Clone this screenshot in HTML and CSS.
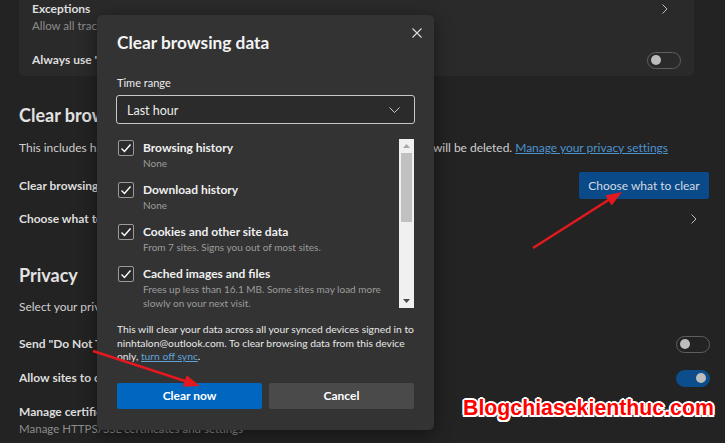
FILE: index.html
```html
<!DOCTYPE html>
<html lang="en">
<head>
    <meta charset="UTF-8">
    <meta name="viewport" content="width=device-width, initial-scale=1.0">
    <title>Clear browsing data</title>
    <link rel="stylesheet" href="styles.css">
</head>
<body>
    <main class="settings">
        <div class="card">
            <div class="card-row first">
                <div class="text">
                    <div class="label">Exceptions</div>
                    <div class="sub">Allow all trackers on sites you choose</div>
                </div>
                <svg class="chev chev-card" width="6" height="10" viewBox="0 0 6 10"><path d="M0.5 0.5 L5 5 L0.5 9.5" fill="none" stroke="#bbb" stroke-width="1"/></svg>
            </div>
            <div class="card-row">
                <div class="label text">Always use "Strict" tracking prevention when browsing InPrivate</div>
                <span class="toggle"></span>
            </div>
        </div>

        <section>
            <h2>Clear browsing data</h2>
            <p class="desc">This includes history, passwords, cookies, and more. Only data from this profile will be deleted. <a href="#">Manage your privacy settings</a></p>
            <div class="row clear-row">
                <div class="label text">Clear browsing data now</div>
                <button class="choose-btn">Choose what to clear</button>
            </div>
            <div class="row choose-row">
                <div class="label text">Choose what to clear every time you close the browser</div>
                <svg class="chev" width="6" height="10" viewBox="0 0 6 10"><path d="M0.5 0.5 L5 5 L0.5 9.5" fill="none" stroke="#bbb" stroke-width="1"/></svg>
            </div>
        </section>

        <section>
            <h2>Privacy</h2>
            <p class="desc">Select your privacy settings for Microsoft Edge.</p>
            <div class="row toggle-row dnt">
                <div class="label text">Send "Do Not Track" requests</div>
                <span class="toggle"></span>
            </div>
            <div class="row toggle-row pay">
                <div class="label text">Allow sites to check if you have payment methods saved</div>
                <span class="toggle on"></span>
            </div>
            <div class="certs">
                <div class="label">Manage certificates</div>
                <div class="sub">Manage HTTPS/SSL certificates and settings</div>
            </div>
        </section>
    </main>

    <div class="dialog">
        <svg class="close" width="10" height="10" viewBox="0 0 10 10"><path d="M0.5 0.5 L9.5 9.5 M9.5 0.5 L0.5 9.5" stroke="#ddd" stroke-width="1.1"/></svg>
        <h1>Clear browsing data</h1>
        <div class="field-label">Time range</div>
        <div class="select">
            <span>Last hour</span>
            <svg width="11" height="6" viewBox="0 0 11 6"><path d="M0.5 0.5 L5.5 5.5 L10.5 0.5" fill="none" stroke="#ccc" stroke-width="1"/></svg>
        </div>

        <div class="list">
            <div class="items">
                <div class="item">
                    <span class="check"><svg width="14" height="14" viewBox="0 0 14 14"><path d="M2.5 7.5 L5.5 10.5 L11.5 3.5" fill="none" stroke="#fff" stroke-width="1.4"/></svg></span>
                    <div>
                        <div class="item-title">Browsing history</div>
                        <div class="item-desc">None</div>
                    </div>
                </div>
                <div class="item">
                    <span class="check"><svg width="14" height="14" viewBox="0 0 14 14"><path d="M2.5 7.5 L5.5 10.5 L11.5 3.5" fill="none" stroke="#fff" stroke-width="1.4"/></svg></span>
                    <div>
                        <div class="item-title">Download history</div>
                        <div class="item-desc">None</div>
                    </div>
                </div>
                <div class="item">
                    <span class="check"><svg width="14" height="14" viewBox="0 0 14 14"><path d="M2.5 7.5 L5.5 10.5 L11.5 3.5" fill="none" stroke="#fff" stroke-width="1.4"/></svg></span>
                    <div>
                        <div class="item-title">Cookies and other site data</div>
                        <div class="item-desc">From 7 sites. Signs you out of most sites.</div>
                    </div>
                </div>
                <div class="item">
                    <span class="check"><svg width="14" height="14" viewBox="0 0 14 14"><path d="M2.5 7.5 L5.5 10.5 L11.5 3.5" fill="none" stroke="#fff" stroke-width="1.4"/></svg></span>
                    <div>
                        <div class="item-title">Cached images and files</div>
                        <div class="item-desc">Frees up less than 16.1 MB. Some sites may load more<br>slowly on your next visit.</div>
                    </div>
                </div>
            </div>
            <div class="scrollbar">
                <svg class="arrow" width="7" height="4" viewBox="0 0 7 4"><path d="M0 4 L3.5 0 L7 4 Z" fill="#a8a8a8"/></svg>
                <div class="thumb"></div>
                <svg class="arrow down" width="7" height="4" viewBox="0 0 7 4"><path d="M0 0 L3.5 4 L7 0 Z" fill="#4a4a4a"/></svg>
            </div>
        </div>

        <p class="note">This will clear your data across all your synced devices signed in to<br>ninhtalon@outlook.com. To clear browsing data from this device<br>only, <a href="#">turn off sync</a>.</p>

        <div class="actions">
            <button class="btn primary">Clear now</button>
            <button class="btn">Cancel</button>
        </div>
    </div>

    <svg class="arrows" width="725" height="443" viewBox="0 0 725 443">
        <line x1="93" y1="351" x2="188" y2="382" stroke="#e3191f" stroke-width="2.5"/>
        <polygon points="200,386 182.9,386.7 186.7,375.3" fill="#e3191f"/>
        <line x1="533" y1="248" x2="610" y2="199" stroke="#e3191f" stroke-width="2.5"/>
        <polygon points="622,192 611.7,205.6 605.3,195.4" fill="#e3191f"/>
    </svg>

    <div class="watermark">Blogchiasekienthuc.com</div>
</body>
</html>
```

FILE: styles.css
```css
:root {
    --page-bg : #232323;
    --card-bg : #2a2a2a;
    --dialog-bg : #333333;
    --text : #d9d9d9;
    --muted : #8c8c8c;
    --link : #4b93cf;
}

body {
    margin : 0;
    height : 443px;
    overflow : hidden;
    position : relative;
    background-color : var(--page-bg);
    color : var(--text);
    font-family : Lato, "Segoe UI", sans-serif;
    font-size : 12px;
}

/* settings page behind the dialog */
.settings {
    padding : 0 15px 0 19px;
}

.card {
    background-color : var(--card-bg);
    border-radius : 0 0 5px 5px;
    margin-right : 16px;
    padding : 1px 13px 0 13px;
    height : 75px;
}

.card-row {
    display : flex;
    justify-content : space-between;
    align-items : center;
    height : 34px;
    margin-top : 7px;
}

.card-row.first {
    align-items : flex-start;
    margin-top : 0;
    height : 35px;
}

.chev-card {
    margin : 3px 13px 0 0;
}

.text {
    flex : 1;
    min-width : 0;
    white-space : nowrap;
    overflow : hidden;
}

.label {
    font-weight : 700;
    line-height : 16px;
    color : #dedede;
}

.sub {
    color : var(--muted);
    line-height : 18px;
    font-size : 11.5px;
}

h2 {
    margin : 27px 0 0;
    font-size : 18px;
    line-height : 24px;
    font-weight : 700;
    color : #e2e2e2;
}

.desc {
    margin : 13px 0 0;
    line-height : 16px;
    white-space : nowrap;
    color : #cfcfcf;
    letter-spacing : -0.02px;
}

.desc a {
    color : var(--link);
}

.row {
    display : flex;
    justify-content : space-between;
    align-items : center;
}

.clear-row {
    margin-top : 16px;
    height : 27px;
}

.choose-btn {
    border : none;
    border-radius : 2px;
    height : 27px;
    width : 130px;
    margin-right : 1px;
    background-color : #0a4a88;
    color : #d3dae2;
    font-family : inherit;
    font-size : 12px;
}

.choose-row {
    margin-top : 6px;
    height : 28px;
}

.choose-row .chev {
    margin-right : 13px;
}

section + section h2 {
    margin-top : 30px;
}

section + section .desc {
    margin-top : 12px;
}

.toggle-row {
    height : 18px;
}

.dnt {
    margin-top : 20px;
}

.pay {
    margin-top : 16px;
}

.toggle {
    width : 34px;
    height : 17px;
    box-sizing : border-box;
    border : 1px solid #5f5f5f;
    border-radius : 9px;
    display : flex;
    align-items : center;
    padding : 0 3px;
    flex-shrink : 0;
}

.toggle::after {
    content : "";
    width : 10px;
    height : 10px;
    border-radius : 50%;
    background-color : #bdbdbd;
}

.toggle.on {
    background-color : #0c4d8c;
    border-color : #0c4d8c;
    justify-content : flex-end;
}

.certs {
    margin-top : 17px;
    white-space : nowrap;
}

/* dialog */
.dialog {
    position : absolute;
    left : 97px;
    top : 15px;
    width : 337px;
    height : 415px;
    box-sizing : border-box;
    padding : 16px 20px 0 20px;
    background-color : var(--dialog-bg);
    border-radius : 5px;
    box-shadow : 0 4px 18px rgba(0, 0, 0, 0.45);
    color : #ececec;
}

.close {
    position : absolute;
    top : 13px;
    right : 12px;
}

h1 {
    margin : 0;
    font-size : 17.3px;
    line-height : 24px;
    font-weight : 700;
    color : #f3f3f3;
}

.field-label {
    margin-top : 21px;
    font-size : 11px;
    line-height : 14px;
}

.select {
    margin : 5px -1px 0;
    height : 29px;
    box-sizing : border-box;
    border : 1px solid #c8c8c8;
    border-radius : 3px;
    background-color : #2b2b2b;
    display : flex;
    align-items : center;
    justify-content : space-between;
    padding : 1px 14px 0 10px;
    font-size : 12.5px;
}

.list {
    margin-top : 15px;
    height : 169px;
    display : flex;
    overflow : hidden;
}

.items {
    flex : 1;
    padding-top : 1px;
}

.item {
    display : flex;
    gap : 9px;
    height : 42px;
}

.check {
    width : 16px;
    height : 16px;
    box-sizing : border-box;
    border : 1px solid #9a9a9a;
    border-radius : 2px;
    margin-left : 1px;
    background-color : #2c2c2c;
    display : flex;
    align-items : center;
    justify-content : center;
    flex-shrink : 0;
}

.item-title {
    font-weight : 700;
    line-height : 16px;
    color : #f0f0f0;
}

.item-desc {
    font-size : 10px;
    line-height : 14px;
    color : #9c9c9c;
}

.scrollbar {
    width : 15px;
    background-color : #f0f0f0;
    display : flex;
    flex-direction : column;
    align-items : center;
}

.scrollbar .arrow {
    margin-top : 5px;
}

.thumb {
    width : 11px;
    height : 69px;
    margin-top : 5px;
    background-color : #c1c1c1;
}

.scrollbar .arrow.down {
    margin-top : auto;
    margin-bottom : 5px;
}

.note {
    margin : 15px 0 0;
    font-size : 10.3px;
    line-height : 13.5px;
    color : #e8e8e8;
}

.note a {
    color : #5ea2da;
}

.actions {
    margin-top : 19px;
    display : grid;
    grid-template-columns : 1fr 1fr;
    gap : 7px;
}

.btn {
    height : 26px;
    border : none;
    border-radius : 2px;
    background-color : #4a4a4a;
    color : #fff;
    font-family : inherit;
    font-size : 12px;
    font-weight : 700;
}

.btn.primary {
    background-color : #0067c0;
}

/* annotations on top of the screenshot */
.arrows {
    position : absolute;
    left : 0;
    top : 0;
    pointer-events : none;
}

.watermark {
    position : absolute;
    left : 463px;
    top : 398px;
    font-family : "Liberation Sans", Arial, sans-serif;
    font-weight : 700;
    font-size : 21.3px;
    line-height : 1;
    color : #f00;
    text-shadow : 2px 0 #fff, -2px 0 #fff, 0 2px #fff, 0 -2px #fff, 1.5px 1.5px #fff, -1.5px 1.5px #fff, 1.5px -1.5px #fff, -1.5px -1.5px #fff;
}
```
